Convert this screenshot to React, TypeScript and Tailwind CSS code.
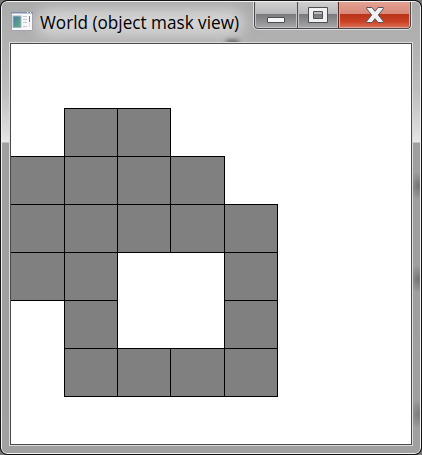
const rows = ["01100", "11110", "11111", "11001", "01001", "01111"];

function AppIcon() {
  return (
    <svg width="23" height="20" viewBox="0 0 23 20" className="shrink-0">
      <defs>
        <linearGradient id="pane" x1="0" y1="0" x2="1" y2="1">
          <stop offset="0" stopColor="#4a7ba5" />
          <stop offset="1" stopColor="#63ad83" />
        </linearGradient>
      </defs>
      <rect x="0.5" y="0.5" width="21" height="18" rx="0.5" fill="#f8f8fa" stroke="#a2a4ae" />
      <rect x="0" y="0" width="22" height="1.500" fill="#8190aa" />
      <rect x="16" y="0" width="1" height="1" fill="#fff" />
      <rect x="19" y="0" width="1" height="1" fill="#fff" />
      <rect x="1.500" y="3.500" width="9" height="12.500" fill="#a5b5c2" />
      <rect x="2.500" y="4.500" width="7" height="10.500" fill="url(#pane)" />
      <path d="M12 4.500h4M12 7.500h4M12 10.500h4M12 14.500h4" stroke="#c6c7cc" />
      <path d="M18.500 4v6" stroke="#4b9863" />
      <path d="M18.500 11v4" stroke="#dcdde0" />
    </svg>
  );
}

function Controls() {
  return (
    <div className="flex h-[29px] w-[159px] overflow-hidden rounded-b-[5px] border border-t-0 border-[#dedede]">
      <div className="flex flex-1 overflow-hidden rounded-b-[4px] border border-t-0 border-[#47484b]">
        <div className="relative h-full w-[42px] rounded-bl-[3px] border border-[#c4c4c6] bg-linear-to-b from-[#cfcfd0] to-[#a0a0a2]">
          <div className="absolute inset-x-0 top-[12px] bottom-0 bg-linear-to-b from-[#77787b] to-[#a4a4a6]" />
          <svg className="absolute top-[15px] left-[11px]" width="18" height="6">
            <rect x="0.5" y="0.5" width="17" height="5" rx="0.5" fill="#f6f6f6" stroke="#4c4e56" />
          </svg>
        </div>
        <div className="h-full w-px bg-[#505155]" />
        <div className="relative h-full w-[40px] border border-[#c4c4c6] bg-linear-to-b from-[#cfcfd0] to-[#a0a0a2]">
          <div className="absolute inset-x-0 top-[12px] bottom-0 bg-linear-to-b from-[#77787b] to-[#a4a4a6]" />
          <svg className="absolute top-[5px] left-[9px]" width="20" height="16">
            <path fillRule="evenodd" d="M.5.5h19v15H.5zM5.500 4.500v7h9v-7z" fill="#f0f0f1" stroke="#4c4e56" />
          </svg>
        </div>
        <div className="h-full w-px bg-[#5a2922]" />
        <div className="relative h-full flex-1 rounded-br-[3px] border border-[#e5a295] bg-linear-to-b from-[#e3a294] to-[#cc6a56]">
          <div className="absolute inset-x-0 top-[12px] bottom-0 bg-linear-to-b from-[#b9331a] via-[#cb4224] via-60% to-[#d9694f]" />
          <svg className="absolute top-[5px] left-[26px]" width="18" height="16" viewBox="0 0 18 16">
            <path d="M.7.5h5.300l3 3.800 3-3.800h5.300v1.300l-5 6.200 5 6.200v1.300H12l-3-3.800-3 3.800H.7v-1.300l5-6.200-5-6.200z" fill="#f1f1f3" stroke="#55545e" strokeLinejoin="round" />
          </svg>
        </div>
      </div>
    </div>
  );
}

function MaskView() {
  return (
    <main className="h-[400px] w-[400px] overflow-hidden bg-white pt-16">
      <div className="grid grid-cols-[53px_53px_53px_54px_53px] grid-rows-[repeat(6,48px)]">
        {rows.flatMap((row, y) =>
          row.split("").map((cell, x) => (
            <div
              key={`${x}-${y}`}
              className={
                cell === "1"
                  ? x === 0
                    ? "-mr-px -mb-px border border-l-0 border-black bg-[#808080]"
                    : "-mr-px -mb-px border border-black bg-[#808080]"
                  : ""
              }
            />
          )),
        )}
      </div>
    </main>
  );
}

export default function App() {
  return (
    <div className="h-[455px] w-[422px] bg-[#777]">
      <div className="h-full w-full overflow-hidden rounded-[7px] border border-[#141414] bg-[#141414]">
        <div className="relative h-full w-full overflow-hidden rounded-[6px] border border-[#f1f1f1] bg-[linear-gradient(to_bottom,#aaaaaa_0px,#b1b1b1_40px,#bebebe_90px,#dcdcdc_130px,#e8e8e8_140px,#9f9f9f_141px,#a0a0a0_100%)]">
          <div className="absolute top-[134px] -right-[5px] h-[100px] w-[14px] bg-[radial-gradient(ellipse_9px_14px_at_center,#757575,transparent)]" />
          <div className="absolute top-[227px] -right-[5px] h-[100px] w-[14px] bg-[radial-gradient(ellipse_9px_14px_at_center,#757575,transparent)]" />
          <div className="absolute top-[362px] -right-[5px] h-[100px] w-[14px] bg-[radial-gradient(ellipse_9px_15px_at_center,#7c7c7c,transparent)]" />
          <div className="absolute top-[7px] left-[34px] h-[27px] w-[208px] rounded-full bg-[#d4d4d4] blur-[7px]" />
          <div className="absolute top-[38px] left-[224px] h-[4px] w-[13px] rounded-full bg-[#555] blur-[2px]" />
          <div className="relative flex h-full flex-col">
            <header className="flex h-[40px] shrink-0 justify-between pr-[8px] pl-[9px]">
              <div className="flex">
                <div className="pt-[10px]">
                  <AppIcon />
                </div>
                <svg width="205" height="40" className="ml-[6px] overflow-visible">
                  <text x="0" y="27" textLength="199" lengthAdjust="spacingAndGlyphs" className="fill-black font-['Open_Sans','Noto_Sans',sans-serif] text-[17.5px]">
                    World (object mask view)
                  </text>
                </svg>
              </div>
              <div className="-mt-px">
                <Controls />
              </div>
            </header>
            <div className="ml-[7px] h-[404px] w-[404px] shrink-0 border border-[#dcdcdc]">
              <div className="border border-[#4a4a4a]">
                <MaskView />
              </div>
            </div>
          </div>
        </div>
      </div>
    </div>
  );
}
